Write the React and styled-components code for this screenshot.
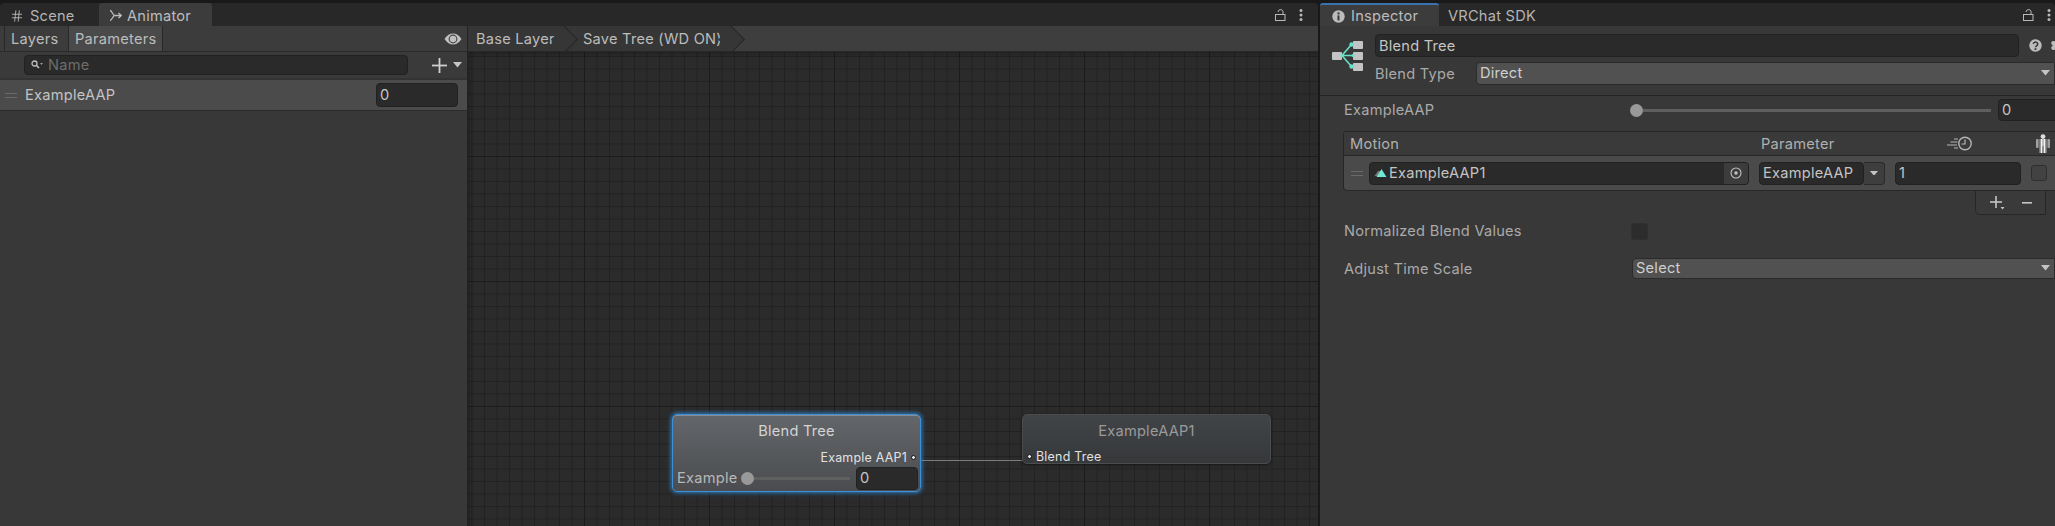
import React from "react";
import styled, { createGlobalStyle } from "styled-components";
import { Hash, Settings } from "lucide-react";

const GlobalStyle = createGlobalStyle`
  html, body {
    margin: 0;
    padding: 0;
    background: #191919;
    overflow: hidden;
  }
  * {
    box-sizing: border-box;
  }
`;

const Page = styled.div`
  width: 2055px;
  height: 526px;
  padding-top: 3px;
  display: flex;
  gap: 2px;
  background: #191919;
  color: #c4c4c4;
  font-family: "Inter", "Liberation Sans", sans-serif;
  font-size: 14.6px;
  letter-spacing: 0.25px;
  white-space: nowrap;
  overflow: hidden;
`;

const Window = styled.div`
  display: flex;
  flex-direction: column;
  flex: none;
  width: ${(props) => props.$width}px;
  height: 523px;
  overflow: hidden;
`;

const TabBar = styled.div`
  display: flex;
  flex: none;
  align-items: stretch;
  height: 23px;
  background: #282828;
  border-top-left-radius: 4px;
  border-top-right-radius: 4px;
`;

const Tab = styled.div`
  display: flex;
  align-items: center;
  gap: ${(props) => props.$gap || 5}px;
  width: ${(props) => props.$width}px;
  padding-left: ${(props) => props.$pad || 10}px;
  padding-top: ${(props) => (props.$accent ? 1 : 2)}px;
  background: ${(props) => (props.$active ? "#3c3c3c" : "transparent")};
  border-top: ${(props) => (props.$accent ? "2px solid #3a72b0" : "none")};
  border-top-left-radius: 3px;
  border-top-right-radius: 3px;
  color: ${(props) => (props.$active ? "#bdbdbd" : "#b4b4b4")};
`;

const TabTools = styled.div`
  display: flex;
  align-items: center;
  gap: 13px;
  margin-left: auto;
  padding-right: ${(props) => props.$right}px;
`;

const Body = styled.div`
  display: flex;
  flex: 1;
  min-height: 0;
`;

const Sidebar = styled.div`
  display: flex;
  flex-direction: column;
  flex: none;
  width: 468px;
  background: #383838;
  border-right: 1px solid #232323;
`;

const SideToolbar = styled.div`
  display: flex;
  align-items: stretch;
  flex: none;
  height: 26px;
  padding-left: 4px;
  background: #3c3c3c;
  border-bottom: 1px solid #2a2a2a;
`;

const SideTab = styled.div`
  display: flex;
  align-items: center;
  padding: 1px 6px 0;
  width: ${(props) => props.$width}px;
  background: ${(props) => (props.$active ? "#4a4a4a" : "#3c3c3c")};
  border-left: 1px solid #282828;
  border-right: ${(props) => (props.$active ? "1px solid #282828" : "none")};
  color: #bcbcbc;
`;

const EyeSlot = styled.div`
  display: flex;
  align-items: center;
  margin-left: auto;
  padding-right: 5px;
`;

const SearchRow = styled.div`
  display: flex;
  align-items: center;
  flex: none;
  height: 28px;
  padding-left: 24px;
  background: #3a3a3a;
  border-bottom: 2px solid #333333;
`;

const SearchField = styled.div`
  display: flex;
  align-items: center;
  gap: 5px;
  width: 384px;
  height: 20px;
  padding-left: 6px;
  background: #2a2a2a;
  border: 1px solid #212121;
  border-radius: 4px;
  color: #6d6d6d;
`;

const AddButton = styled.div`
  display: flex;
  align-items: center;
  gap: 6px;
  margin-left: 24px;
`;

const ParamRow = styled.div`
  display: flex;
  align-items: center;
  flex: none;
  height: 31px;
  padding: 0 9px 0 5px;
  background: #4b4b4b;
  border-bottom: 1px solid #2c2c2c;
`;

const Handle = styled.div`
  flex: none;
  width: 12px;
  height: 5px;
  border-top: 1px solid #6a6a6a;
  border-bottom: 1px solid #6a6a6a;
`;

const ParamName = styled.div`
  flex: 1;
  margin-left: 8px;
`;

const Main = styled.div`
  display: flex;
  flex-direction: column;
  flex: 1;
  min-width: 0;
`;

const Breadcrumbs = styled.div`
  display: flex;
  align-items: stretch;
  flex: none;
  height: 26px;
  background: #3e3e3e;
  border-bottom: 1px solid #272727;
  overflow: hidden;
`;

const Crumb = styled.div`
  position: relative;
  display: flex;
  align-items: center;
  width: ${(props) => props.$width}px;
  padding: 1px 0 0 ${(props) => props.$pad}px;
  background: #363636;
  color: #bcbcbc;
  z-index: ${(props) => props.$z};

  &::after {
    content: "";
    position: absolute;
    top: 3.5px;
    right: -9px;
    width: 18px;
    height: 18px;
    background: #363636;
    border-top: 1px solid #262626;
    border-right: 1px solid #262626;
    transform: rotate(45deg);
  }
`;

const Graph = styled.div`
  position: relative;
  flex: 1;
  background-color: #2b2b2b;
  background-image:
    linear-gradient(to right, #1c1c1c 1px, transparent 1px),
    linear-gradient(to bottom, #1c1c1c 1px, transparent 1px),
    linear-gradient(to right, #222222 1px, transparent 1px),
    linear-gradient(to bottom, #222222 1px, transparent 1px);
  background-size: 125px 125px, 125px 125px, 12.5px 12.5px, 12.5px 12.5px;
  background-position: 116px 104px, 116px 104px, 3.5px 4px, 3.5px 4px;
  box-shadow: inset 5px 5px 6px -5px rgba(0, 0, 0, 0.4);
`;

const Node = styled.div`
  position: absolute;
  left: ${(props) => props.$x}px;
  top: ${(props) => props.$y}px;
  width: 249px;
  height: ${(props) => props.$height}px;
  display: flex;
  flex-direction: column;
  border-radius: 5px;
  background: ${(props) =>
    props.$selected
      ? "linear-gradient(#63666a, #4a4c4f)"
      : "linear-gradient(#414447, #36383a)"};
  border: 1px solid ${(props) => (props.$selected ? "#3f8fd6" : "#4a4c4e")};
  box-shadow: ${(props) =>
    props.$selected
      ? "0 0 4px 1px #2f7fc4, inset 0 1px 0 #8a8d90"
      : "0 1px 3px rgba(0, 0, 0, 0.5)"};
`;

const NodeTitle = styled.div`
  margin-top: 7px;
  height: 18px;
  line-height: 18px;
  text-align: center;
  color: ${(props) => (props.$dim ? "#9b9b9b" : "#d4d4d4")};
`;

const NodePortRow = styled.div`
  display: flex;
  align-items: center;
  justify-content: ${(props) => (props.$left ? "flex-start" : "flex-end")};
  gap: 4px;
  margin-top: 9px;
  padding: ${(props) => (props.$left ? "0 0 0 4px" : "0 4px 0 0")};
  height: 17px;
  font-size: 12.4px;
  color: #e2e2e2;
`;

const Port = styled.span`
  width: 5px;
  height: 5px;
  border-radius: 50%;
  background: #e8e8e8;
  border: 1px solid #111111;
`;

const NodeSlider = styled.div`
  display: flex;
  align-items: center;
  padding: 0 2px 0 4px;
  height: 22px;
  margin-top: 1px;
  color: #b8b8b8;
`;

const NodeLabel = styled.span`
  flex: none;
  width: 64px;
`;

const Wire = styled.div`
  position: absolute;
  left: 448px;
  top: 408px;
  width: 106px;
  height: 1px;
  background: #7d7d7d;
`;

const InspectorBody = styled.div`
  flex: 1;
  background: #383838;
  min-height: 0;
`;

const InspectorHead = styled.div`
  display: grid;
  grid-template-columns: 43px 1fr;
  grid-template-rows: 23px 23px;
  row-gap: 5px;
  height: 70px;
  padding: 8px 0 0 12px;
  border-bottom: 1px solid #242424;
`;

const HeadIcon = styled.div`
  grid-row: 1 / span 2;
  padding-top: 6px;
`;

const NameRow = styled.div`
  display: flex;
  align-items: center;
  min-width: 0;
`;

const Field = styled.div`
  display: flex;
  align-items: center;
  flex: ${(props) => (props.$grow ? 1 : "none")};
  width: ${(props) => (props.$width ? `${props.$width}px` : "auto")};
  height: ${(props) => props.$height || 23}px;
  padding-left: 3px;
  background: #2a2a2a;
  border: 1px solid #212121;
  border-radius: 4px;
  color: #c4c4c4;
  overflow: hidden;
`;

const HeadTools = styled.div`
  display: flex;
  flex: none;
  align-items: center;
  gap: 8px;
  width: 26px;
  margin-left: 10px;

  > svg {
    flex: none;
  }
`;

const FormRow = styled.div`
  display: flex;
  align-items: center;
  height: ${(props) => props.$height}px;
  margin-top: ${(props) => props.$top}px;
  padding-left: ${(props) => props.$pad || 0}px;
`;

const Label = styled.div`
  flex: none;
  width: ${(props) => props.$width}px;
  color: #aaaaaa;
`;

const Select = styled.div`
  display: flex;
  align-items: center;
  justify-content: space-between;
  flex: 1;
  height: ${(props) => props.$height}px;
  padding: 0 4px 1px 3px;
  background: #515151;
  border: 1px solid #2b2b2b;
  border-radius: 4px 0 0 4px;
  color: #cfcfcf;
`;

const SliderTrack = styled.div`
  flex: none;
  width: ${(props) => props.$width}px;
  height: 3px;
  margin-right: ${(props) => props.$gap}px;
  background: #5f5f5f;
`;

const SliderThumb = styled.div`
  flex: none;
  width: 13px;
  height: 13px;
  border-radius: 50%;
  background: #999999;
`;

const Table = styled.div`
  margin: 10px 0 0 23px;
  border-left: 1px solid #262626;
  border-radius: 4px 0 0 4px;
`;

const TableHead = styled.div`
  display: flex;
  align-items: center;
  height: 25px;
  padding-left: 6px;
  background: #3a3a3a;
  border-top: 1px solid #272727;
  border-bottom: 1px solid #272727;
  color: #b0b0b0;
`;

const HeadCell = styled.span`
  flex: none;
  width: ${(props) => props.$width}px;
`;

const TableRow = styled.div`
  display: flex;
  align-items: center;
  gap: 10px;
  height: 35px;
  padding: 0 0 0 7px;
  background: #4a4a4a;
  border-bottom: 1px solid #272727;
  border-radius: 0 0 0 4px;
`;

const ObjectField = styled(Field)`
  padding-left: 4px;
  padding-right: 0;
  margin-left: -4px;
  gap: 2px;
`;

const PickButton = styled.div`
  display: flex;
  align-items: center;
  justify-content: center;
  flex: none;
  width: 24px;
  height: 100%;
  margin-left: auto;
  background: #3c3c3c;
`;

const ParamPicker = styled.div`
  display: flex;
  flex: none;
`;

const ParamCaret = styled.div`
  display: flex;
  align-items: center;
  justify-content: center;
  width: 21px;
  height: 23px;
  background: #3e3e3e;
  border: 1px solid #2a2a2a;
  border-left: none;
  border-radius: 0 4px 4px 0;
`;

const CheckBox = styled.div`
  flex: none;
  width: ${(props) => props.$size}px;
  height: ${(props) => props.$size}px;
  background: ${(props) => props.$color};
  border: 1px solid #2f2f2f;
  border-radius: 3px;
`;

const FooterWrap = styled.div`
  display: flex;
  justify-content: flex-end;
  padding-right: 9px;
`;

const Footer = styled.div`
  display: flex;
  align-items: center;
  justify-content: center;
  gap: 17px;
  width: 71px;
  height: 24px;
  border: 1px solid #272727;
  border-top: none;
  border-radius: 0 0 0 5px;
  background: #3a3a3a;
`;

const Caret = ({ size = 9, color = "#c4c4c4" }) => (
  <svg width={size} height={size * 0.6} viewBox="0 0 10 6">
    <path d="M0 0h10L5 6z" fill={color} />
  </svg>
);

const LockIcon = () => (
  <svg width="11" height="12" viewBox="0 0 11 12" fill="none" stroke="#b8b8b8" strokeWidth="1">
    <rect x="0.5" y="5.5" width="9.5" height="6" />
    <path d="M3 3A2.6 2.6 0 0 1 8 2.2V5.5" />
  </svg>
);

const MenuDots = () => (
  <svg width="4" height="12" viewBox="0 0 4 12" fill="#b8b8b8">
    <circle cx="2" cy="1.5" r="1.5" />
    <circle cx="2" cy="6" r="1.5" />
    <circle cx="2" cy="10.5" r="1.5" />
  </svg>
);

const AnimatorIcon = () => (
  <svg width="13" height="13" viewBox="0 0 13 13" fill="none" stroke="#bdbdbd" strokeWidth="1.3">
    <path d="M1 1.5c2 0 3 5 4.5 5S10 6.5 12 6.5M1 11.5c2 0 3-5 4.5-5" />
    <path d="M9.5 4l2.7 2.5L9.5 9" />
  </svg>
);

const InfoIcon = () => (
  <svg width="13" height="13" viewBox="0 0 13 13">
    <circle cx="6.5" cy="6.5" r="6.2" fill="#bcbcbc" />
    <rect x="5.5" y="2.4" width="2" height="2" fill="#383838" />
    <rect x="5.5" y="5.4" width="2" height="5" fill="#383838" />
  </svg>
);

const EyeIcon = () => (
  <svg width="18" height="12" viewBox="0 0 18 12">
    <path d="M0.5 6C3 2 6 0.5 9 0.5S15 2 17.5 6C15 10 12 11.5 9 11.5S3 10 0.5 6z" fill="#c0c0c0" />
    <circle cx="9" cy="6" r="4.4" fill="#4a4a4a" />
    <circle cx="9" cy="6" r="3.2" fill="#c0c0c0" />
  </svg>
);

const SearchIcon = () => (
  <svg width="12" height="10" viewBox="0 0 12 10" fill="none">
    <circle cx="3.5" cy="3.5" r="2.5" stroke="#c0c0c0" strokeWidth="1.3" />
    <path d="M5.5 5.5L8 8" stroke="#c0c0c0" strokeWidth="1.6" />
    <path d="M9 3h3L10.5 5z" fill="#9a9a9a" />
  </svg>
);

const PlusIcon = () => (
  <svg width="15" height="15" viewBox="0 0 15 15" fill="#d0d0d0">
    <rect x="6.6" y="0" width="1.8" height="15" />
    <rect x="0" y="6.6" width="15" height="1.8" />
  </svg>
);

const BlendTreeIcon = () => (
  <svg width="32" height="32" viewBox="0 0 32 32" fill="none">
    <g fill="#c4c4c4">
      <rect x="0" y="12" width="10" height="8" rx="1" />
      <rect x="21" y="1" width="10" height="8" rx="1" />
      <rect x="21" y="12" width="10" height="8" rx="1" />
      <rect x="21" y="23" width="10" height="8" rx="1" />
    </g>
    <path d="M19.5 4.5L10 15.5L19.5 26.5M10 15.5H21" stroke="#62e2c8" strokeWidth="1.6" />
    <g fill="#62e2c8">
      <circle cx="19.5" cy="4.5" r="2.2" />
      <circle cx="19.5" cy="26.5" r="2.2" />
      <circle cx="21" cy="15.5" r="1.6" />
      <circle cx="10" cy="15.5" r="1.6" />
    </g>
  </svg>
);

const ClipIcon = () => (
  <svg width="13" height="11" viewBox="0 0 13 11">
    <path d="M0.5 8L4 3h2v5z" fill="#777777" />
    <path d="M7.5 1L12.5 9h-10z" fill="#6ee8d2" />
  </svg>
);

const TargetIcon = () => (
  <svg width="12" height="12" viewBox="0 0 12 12" fill="none">
    <circle cx="6" cy="6" r="5" stroke="#c4c4c4" strokeWidth="1.1" />
    <circle cx="6" cy="6" r="1.7" fill="#c4c4c4" />
  </svg>
);

const TimeIcon = () => (
  <svg width="25" height="15" viewBox="0 0 25 15" fill="none" stroke="#b5b5b5">
    <circle cx="18" cy="7.5" r="6.2" strokeWidth="1.4" />
    <path d="M18 3.5v4.5h-3.5" strokeWidth="1.2" />
    <path d="M7 3h4M3.5 6h7M0 9h10M7 12h4" strokeWidth="1" />
  </svg>
);

const AvatarIcon = () => (
  <svg width="16" height="19" viewBox="0 0 16 19">
    <circle cx="8" cy="2.6" r="2.4" fill="#dddddd" />
    <rect x="1" y="5" width="2.6" height="9" rx="1" fill="#a0a0a0" />
    <rect x="12.4" y="5" width="2.6" height="9" rx="1" fill="#a0a0a0" />
    <path d="M4.4 5h7.2v14H8.8V12H7.2v7H4.4z" fill="#9a9a9a" />
    <path d="M6 5h1.4v14H6zM8.6 5H10v14H8.6z" fill="#f2f2f2" />
  </svg>
);

const HelpIcon = () => (
  <svg width="13" height="13" viewBox="0 0 13 13">
    <circle cx="6.5" cy="6.5" r="6.2" fill="#bcbcbc" />
    <path d="M4.3 5a2.2 2 0 1 1 3.3 1.8c-.8.5-1.1.8-1.1 1.5" fill="none" stroke="#383838" strokeWidth="1.5" />
    <rect x="5.6" y="9.2" width="1.8" height="1.8" fill="#383838" />
  </svg>
);

const MinusIcon = () => (
  <svg width="10" height="2" viewBox="0 0 10 2" fill="#c4c4c4">
    <rect width="10" height="1.6" />
  </svg>
);

const FooterPlus = () => (
  <svg width="15" height="14" viewBox="0 0 15 14" fill="#c4c4c4">
    <rect x="5.2" y="0" width="1.6" height="12" />
    <rect x="0" y="5.2" width="12" height="1.6" />
    <path d="M10.5 11h4l-2 2.5z" />
  </svg>
);

function AnimatorWindow() {
  return (
    <Window $width={1318}>
      <TabBar>
        <Tab $width={99} $gap={6}>
          <Hash size={14} strokeWidth={1.5} color="#bdbdbd" />
          <span>Scene</span>
        </Tab>
        <Tab $width={113} $active>
          <AnimatorIcon />
          <span>Animator</span>
        </Tab>
        <TabTools $right={15}>
          <LockIcon />
          <MenuDots />
        </TabTools>
      </TabBar>
      <Body>
        <Sidebar>
          <SideToolbar>
            <SideTab $width={64}>Layers</SideTab>
            <SideTab $width={95} $active>
              Parameters
            </SideTab>
            <EyeSlot>
              <EyeIcon />
            </EyeSlot>
          </SideToolbar>
          <SearchRow>
            <SearchField>
              <SearchIcon />
              <span>Name</span>
            </SearchField>
            <AddButton>
              <PlusIcon />
              <Caret />
            </AddButton>
          </SearchRow>
          <ParamRow>
            <Handle />
            <ParamName>ExampleAAP</ParamName>
            <Field $width={82} $height={24}>
              0
            </Field>
          </ParamRow>
        </Sidebar>
        <Main>
          <Breadcrumbs>
            <Crumb $width={97} $pad={8} $z={2}>
              Base Layer
            </Crumb>
            <Crumb $width={167} $pad={18} $z={1}>
              Save Tree (WD ON)
            </Crumb>
          </Breadcrumbs>
          <Graph>
            <Wire />
            <Node $x={204} $y={362} $height={78} $selected>
              <NodeTitle>Blend Tree</NodeTitle>
              <NodePortRow>
                Example AAP1
                <Port />
              </NodePortRow>
              <NodeSlider>
                <NodeLabel>Example</NodeLabel>
                <SliderThumb />
                <SliderTrack $width={96} $gap={6} />
                <Field $width={62} $height={23}>
                  0
                </Field>
              </NodeSlider>
            </Node>
            <Node $x={554} $y={362} $height={50}>
              <NodeTitle $dim>ExampleAAP1</NodeTitle>
              <NodePortRow $left>
                <Port />
                Blend Tree
              </NodePortRow>
            </Node>
          </Graph>
        </Main>
      </Body>
    </Window>
  );
}

function InspectorWindow() {
  return (
    <Window $width={735}>
      <TabBar>
        <Tab $width={119} $active $accent $pad={12} $gap={6}>
          <InfoIcon />
          <span>Inspector</span>
        </Tab>
        <Tab $width={150} $pad={9}>
          VRChat SDK
        </Tab>
        <TabTools $right={4}>
          <LockIcon />
          <MenuDots />
        </TabTools>
      </TabBar>
      <InspectorBody>
        <InspectorHead>
          <HeadIcon>
            <BlendTreeIcon />
          </HeadIcon>
          <NameRow>
            <Field $grow>Blend Tree</Field>
            <HeadTools>
              <HelpIcon />
              <Settings size={15} color="#bcbcbc" fill="#bcbcbc" />
            </HeadTools>
          </NameRow>
          <NameRow>
            <Label $width={101}>Blend Type</Label>
            <Select $height={23}>
              Direct
              <Caret size={9} />
            </Select>
          </NameRow>
        </InspectorHead>

        <FormRow $height={22} $top={3} $pad={24}>
          <Label $width={286}>ExampleAAP</Label>
          <SliderThumb />
          <SliderTrack $width={348} $gap={7} />
          <Field $width={80} $height={22}>
            0
          </Field>
        </FormRow>

        <Table>
          <TableHead>
            <HeadCell $width={411}>Motion</HeadCell>
            <HeadCell $width={186}>Parameter</HeadCell>
            <TimeIcon />
            <HeadCell $width={63} />
            <AvatarIcon />
          </TableHead>
          <TableRow>
            <Handle />
            <ObjectField $width={380}>
              <ClipIcon />
              <span>ExampleAAP1</span>
              <PickButton>
                <TargetIcon />
              </PickButton>
            </ObjectField>
            <ParamPicker>
              <Field $width={105}>ExampleAAP</Field>
              <ParamCaret>
                <Caret size={8} />
              </ParamCaret>
            </ParamPicker>
            <Field $width={126}>1</Field>
            <CheckBox $size={16} $color="#424242" />
          </TableRow>
        </Table>
        <FooterWrap>
          <Footer>
            <FooterPlus />
            <MinusIcon />
          </Footer>
        </FooterWrap>

        <FormRow $height={18} $top={7} $pad={24}>
          <Label $width={287}>Normalized Blend Values</Label>
          <CheckBox $size={17} $color="#2c2c2c" />
        </FormRow>
        <FormRow $height={21} $top={18} $pad={24}>
          <Label $width={288}>Adjust Time Scale</Label>
          <Select $height={21}>
            Select
            <Caret size={9} />
          </Select>
        </FormRow>
      </InspectorBody>
    </Window>
  );
}

export default function App() {
  return (
    <>
      <GlobalStyle />
      <Page>
        <AnimatorWindow />
        <InspectorWindow />
      </Page>
    </>
  );
}
